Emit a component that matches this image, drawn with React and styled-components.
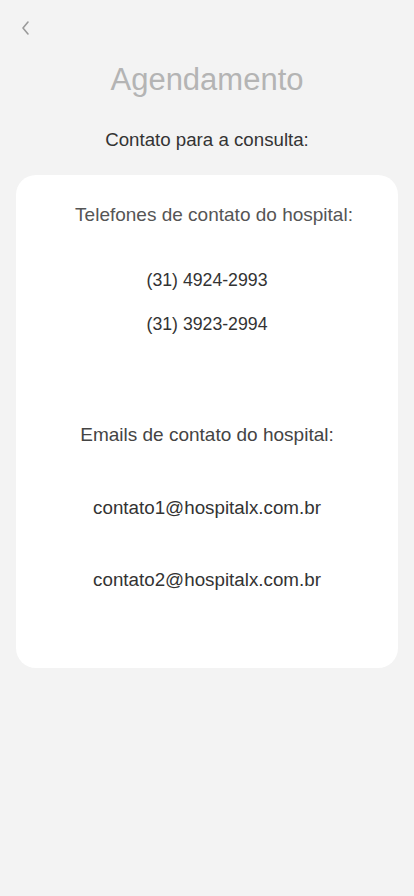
import React from "react";
import styled, { createGlobalStyle } from "styled-components";

const GlobalStyle = createGlobalStyle`
  html, body {
    margin: 0;
    padding: 0;
    background: #f3f3f3;
    font-family: "Liberation Sans", Arial, sans-serif;
  }
`;

const Page = styled.div`
  width: 414px;
  min-height: 896px;
  background: #f3f3f3;
  display: flex;
  flex-direction: column;
  box-sizing: border-box;
  padding: 18px 16px 0;
`;

const BackButton = styled.button`
  width: 20px;
  height: 20px;
  padding: 0;
  border: none;
  background: none;
  display: flex;
  align-items: center;
  justify-content: center;
  cursor: pointer;
`;

const Title = styled.h1`
  margin: 24px 0 0;
  text-align: center;
  font-size: 31px;
  line-height: 36px;
  font-weight: 400;
  color: #b4b4b4;
`;

const Subtitle = styled.h2`
  margin: 31px 0 0;
  text-align: center;
  font-size: 18.7px;
  line-height: 22px;
  font-weight: 400;
  color: #333;
`;

const Card = styled.div`
  margin-top: 24px;
  background: #fff;
  border-radius: 20px;
  padding: 30px 0 78px;
  display: flex;
  flex-direction: column;
`;

const Heading = styled.p`
  margin: ${(p) => p.$top || 0}px 0 0;
  padding-left: ${(p) => p.$shift || 0}px;
  text-align: center;
  font-size: 19px;
  line-height: 20px;
  color: ${(p) => p.$color || "#444"};
`;

const Item = styled.p`
  margin: ${(p) => p.$top}px 0 0;
  text-align: center;
  font-size: ${(p) => p.$size || 17.7}px;
  line-height: 20px;
  color: #333;
`;

export default function App() {
  return (
    <>
      <GlobalStyle />
      <Page>
        <BackButton aria-label="Voltar">
          <svg width="12" height="16" viewBox="0 0 12 16">
            <path d="M8 2 L3 8 L8 14" fill="none" stroke="#9a9a9a" strokeWidth="1.6" strokeLinecap="round" strokeLinejoin="round" />
          </svg>
        </BackButton>
        <Title>Agendamento</Title>
        <Subtitle>Contato para a consulta:</Subtitle>
        <Card>
          <Heading $shift={14} $color="#555">Telefones de contato do hospital:</Heading>
          <Item $top={45}>(31) 4924-2993</Item>
          <Item $top={24}>(31) 3923-2994</Item>
          <Heading $top={91}>Emails de contato do hospital:</Heading>
          <Item $top={53} $size={18.8}>contato1@hospitalx.com.br</Item>
          <Item $top={52} $size={18.8}>contato2@hospitalx.com.br</Item>
        </Card>
      </Page>
    </>
  );
}
